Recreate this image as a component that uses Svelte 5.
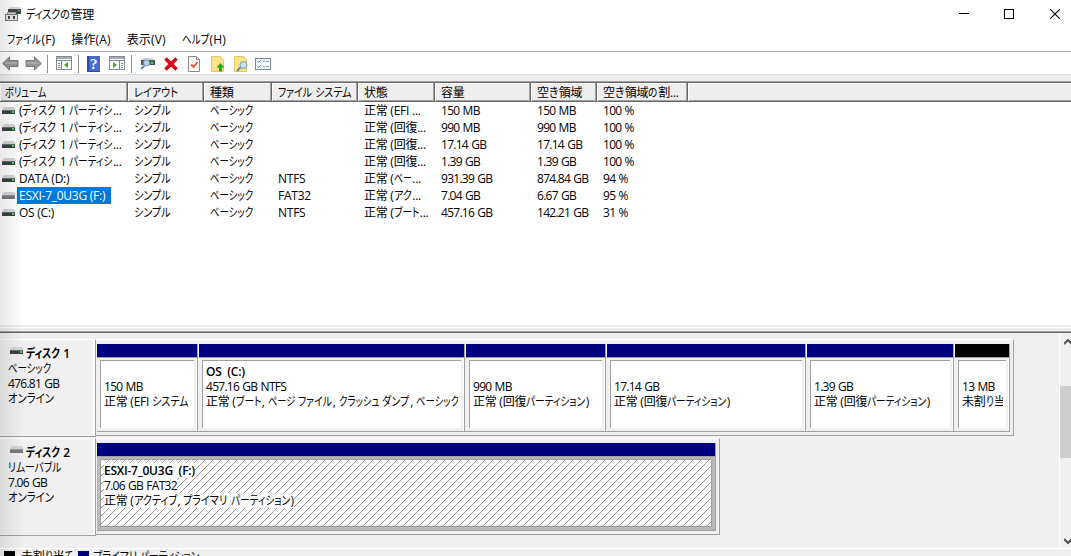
<script>
  const columns = [
    { label: 'ボリューム', width: 128 },
    { label: 'レイアウト', width: 76 },
    { label: '種類', width: 68 },
    { label: 'ファイル システム', width: 86 },
    { label: '状態', width: 77 },
    { label: '容量', width: 96 },
    { label: '空き領域', width: 66 },
    { label: '空き領域の割...', width: 91 },
  ];

  const recovery = '(ディスク 1 パーティシ...';

  const volumes = [
    { cells: [recovery, 'シンプル', 'ベーシック', '', '正常 (EFI ...', '150 MB', '150 MB', '100 %'] },
    { cells: [recovery, 'シンプル', 'ベーシック', '', '正常 (回復...', '990 MB', '990 MB', '100 %'] },
    { cells: [recovery, 'シンプル', 'ベーシック', '', '正常 (回復...', '17.14 GB', '17.14 GB', '100 %'] },
    { cells: [recovery, 'シンプル', 'ベーシック', '', '正常 (回復...', '1.39 GB', '1.39 GB', '100 %'] },
    { cells: ['DATA (D:)', 'シンプル', 'ベーシック', 'NTFS', '正常 (ベー...', '931.39 GB', '874.84 GB', '94 %'] },
    { cells: ['ESXI-7_0U3G (F:)', 'シンプル', 'ベーシック', 'FAT32', '正常 (アク...', '7.04 GB', '6.67 GB', '95 %'], removable: true, selected: true },
    { cells: ['OS (C:)', 'シンプル', 'ベーシック', 'NTFS', '正常 (ブート...', '457.16 GB', '142.21 GB', '31 %'] },
  ];

  const disks = [
    {
      name: 'ディスク 1', type: 'ベーシック', size: '476.81 GB', status: 'オンライン', width: 918,
      partitions: [
        { width: 101, name: '', size: '150 MB', status: '正常 (EFI システム' },
        { width: 267, name: 'OS\u00a0 (C:)', size: '457.16 GB NTFS', status: '正常 (ブート, ページ ファイル, クラッシュ ダンプ, ベーシック' },
        { width: 141, name: '', size: '990 MB', status: '正常 (回復パーティション)' },
        { width: 200, name: '', size: '17.14 GB', status: '正常 (回復パーティション)' },
        { width: 148, name: '', size: '1.39 GB', status: '正常 (回復パーティション)' },
        { width: 56, name: '', size: '13 MB', status: '未割り当', unallocated: true },
      ],
    },
    {
      name: 'ディスク 2', type: 'リムーバブル', size: '7.06 GB', status: 'オンライン', width: 624, removable: true,
      partitions: [
        { width: 619, name: 'ESXI-7_0U3G\u00a0 (F:)', size: '7.06 GB FAT32', status: '正常 (アクティブ, プライマリ パーティション)', selected: true },
      ],
    },
  ];

  const menus = ['ファイル(F)', '操作(A)', '表示(V)', 'ヘルプ(H)'];

  function kanaWidth(c) {
    if (/[ァィゥェォッャュョ]/.test(c)) return 6.6;
    if (/[リト]/.test(c)) return 7.5;
    if (/[りて]/.test(c)) return 8.3;
    return /[ぁ-ん]/.test(c) ? 10 : 9.3;
  }

  // UI kana are condensed, kanji and latin keep their own advance
  function runs(text) {
    return (text.match(/[ぁ-んァ-ヶー]+|[^ぁ-んァ-ヶー]+/g) ?? []).map((t) => ({
      t,
      kana: /^[ぁ-んァ-ヶー]/.test(t),
      width: [...t].reduce((w, c) => w + kanaWidth(c), 0),
    }));
  }
</script>

{#snippet label(text)}
  {#each runs(text) as run}{#if run.kana}<svg class="kana" width={run.width} height="10"><text y="10" textLength={run.width - 0.6} lengthAdjust="spacingAndGlyphs">{run.t}</text></svg>{:else}<span class="run" class:digits={/^\d/.test(run.t)}>{run.t}</span>{/if}{/each}
{/snippet}

{#snippet drive(removable)}
  <svg class="drive" width="14" height="10">
    <path d="M2 1h10l2 3H0z" fill="#d2d4d8" />
    <rect y="4" width="13" height="4" fill={removable ? '#77797c' : '#3d4044'} />
    <path d="M0 4.5h13" stroke={removable ? '#999' : '#686b70'} />
    {#if !removable}<rect x="10" y="5" width="2" height="2" fill="#25ef39" />{/if}
  </svg>
{/snippet}

{#snippet panelIcon(flip)}
  <svg width="17" height="15">
    <rect x=".5" y=".5" width="15" height="13" fill="#fafafa" stroke="#858b95" />
    <path d="M1 2h14" stroke="#a5abb5" stroke-width="2" />
    <path d="M1 4.5h14" stroke="#858b95" />
    <path d={flip ? 'M10.5 5v8' : 'M5.5 5v8'} stroke="#858b95" />
    <path d={flip ? 'M12 7.5h2M12 9.5h2M12 11.5h2' : 'M2 7.5h2M2 9.5h2M2 11.5h2'} stroke="#7c8ea5" />
    <path d={flip ? 'M4 6v6l4-3z' : 'M12 6v6L8 9z'} fill="#3bab27" />
  </svg>
{/snippet}

<div class="window">
  <header class="titlebar">
    <svg class="app-icon" width="17" height="16">
      <path d="M5 1h9l2 3H3z" fill="#d5d5d5" />
      <rect x="3" y="3" width="13" height="5" fill="#48494b" />
      <rect x="13" y="4" width="2" height="1" fill="#26dc37" />
      <rect x="2.5" y="6.5" width="8" height="2" fill="#ddd" stroke="#999" />
      <rect x=".5" y="8.5" width="12" height="6" fill="#e8e8e8" stroke="#777" />
      <path d="M3 10h2v3H3zM8 10h2v3H8z" fill="#444" />
    </svg>
    <span class="title">{@render label('ディスクの管理')}</span>
    <div class="controls">
      <svg width="10" height="10"><path d="M0 4.5h10" stroke="#000" /></svg>
      <svg width="10" height="10"><rect x=".5" y=".5" width="9" height="9" fill="none" stroke="#000" /></svg>
      <svg class="close" width="10" height="10"><path d="M0 0l10 10M10 0L0 10" stroke="#000" stroke-width="1.1" /></svg>
    </div>
  </header>

  <nav class="menubar">
    {#each menus as menu}<div>{@render label(menu)}</div>{/each}
  </nav>

  <div class="toolbar">
    <svg width="17" height="15"><path d="M.7 7.5L7.5 1v3.5H16v6H7.5V14z" fill="#969696" stroke="#777" /><path d="M3 7h12" stroke="#bdbdbd" /></svg>
    <svg class="forward" width="17" height="15"><path d="M16.3 7.5L9.5 1v3.5H1v6h8.5V14z" fill="#969696" stroke="#777" /><path d="M2 7h12" stroke="#bdbdbd" /></svg>
    <i class="sep"></i>
    {@render panelIcon(false)}
    <i class="sep"></i>
    <svg class="help" width="13" height="16">
      <rect width="13" height="16" fill="#2c4aa8" />
      <rect x="2" width="11" height="15" fill="#4569d0" />
      <text class="question" x="3" y="13">?</text>
    </svg>
    {@render panelIcon(true)}
    <i class="sep"></i>
    <svg width="15" height="13">
      <path d="M3 1h9l3 3H1z" fill="#ccd0d3" />
      <rect x="1" y="3" width="14" height="5" fill="#53595e" />
      <rect x="11" y="5" width="2" height="2" fill="#2ae43c" />
      <path d="M1 12l4-4" stroke="#708da4" stroke-width="2" />
      <circle cx="6.5" cy="6" r="3" fill="#aed7eb" stroke="#7897ad" />
    </svg>
    <svg width="14" height="14" class="delete"><path d="M1.5 1.5l11 11M12.5 1.5l-11 11" stroke="#d90012" stroke-width="3.6" /></svg>
    <svg width="13" height="16" class="file">
      <path d="M.5.5h8l3 3v12H.5z" fill="#fafafa" stroke="#8a8a8a" />
      <path d="M8.5.5v3h3" fill="none" stroke="#8a8a8a" />
      <path d="M3 8.5L5.5 11l4-5" fill="none" stroke="#ed6031" stroke-width="2" />
    </svg>
    <svg width="14" height="16" class="file">
      <path d="M.5.5h9l3 3v12H.5z" fill="#fbe38a" stroke="#e5c766" />
      <path d="M9.5 7l4 4.5H11v4H8v-4H5.500z" fill="#29a721" />
    </svg>
    <svg width="15" height="16" class="folder">
      <path d="M.5.5h9l3 3v12H.5z" fill="#fbe38a" stroke="#e5c766" />
      <path d="M3 15l4-4" stroke="#6b8aa0" stroke-width="2" />
      <circle cx="9.5" cy="9" r="3.5" fill="#c5e2f0" stroke="#7d9caf" />
    </svg>
    <svg width="16" height="12" class="list-icon">
      <rect x=".5" y=".5" width="15" height="11" fill="#f8fafc" stroke="#788594" />
      <path d="M2.5 3l1.2 1.5L6 2M2.5 8l1.2 1.5L6 7" fill="none" stroke="#3b8de0" />
      <path d="M8 3.5h2M11 3.5h3M8 8.5h2M11 8.5h3" stroke="#8b98a5" />
    </svg>
  </div>

  <section class="volume-list">
    <div class="row head">
      {#each columns as col}
        <div class="th" style:width="{col.width}px">{@render label(col.label)}</div>
      {/each}
      <div class="th rest"></div>
    </div>
    {#each volumes as volume}
      <div class="row">
        {#each volume.cells as cell, i}
          <div class="td" class:first={i === 0} style:width="{columns[i].width}px">
            {#if i === 0}{@render drive(volume.removable)}{/if}
            <div class="cell" class:selected={i === 0 && volume.selected}>{@render label(cell)}</div>
          </div>
        {/each}
      </div>
    {/each}
  </section>

  <section class="lower">
    <div class="disks">
      {#each disks as disk}
        <div class="disk">
          <div class="disk-info">
            <div class="disk-name">{@render drive(disk.removable)}<b>{@render label(disk.name)}</b></div>
            <div>{@render label(disk.type)}</div>
            <div>{@render label(disk.size)}</div>
            <div>{@render label(disk.status)}</div>
          </div>
          <div class="partitions" style:width="{disk.width}px">
            {#each disk.partitions as part}
              <div class="partition" class:active={part.selected} style:width="{part.width}px">
                <div class="stripe" class:black={part.unallocated}></div>
                <div class="part-body">
                  <div class="part-text">
                    <div class="line"><b>{@render label(part.name)}</b></div>
                    <div class="line"><span>{@render label(part.size)}</span></div>
                    <div class="line"><span>{@render label(part.status)}</span></div>
                  </div>
                </div>
              </div>
            {/each}
          </div>
        </div>
      {/each}
    </div>
    <div class="scrollbar">
      <svg width="8" height="6"><path d="M0 5l4-4 4 4" fill="none" stroke="#505050" stroke-width="2" /></svg>
      <div class="thumb"></div>
      <svg width="8" height="6"><path d="M0 1l4 4 4-4" fill="none" stroke="#505050" stroke-width="2" /></svg>
    </div>
  </section>

  <footer class="legend">
    <i class="swatch black"></i><span class="legend-text">{@render label('未割り当て')}</span>
    <i class="swatch"></i><span class="legend-text">{@render label('プライマリ パーティション')}</span>
  </footer>
  <div class="edge-shade"></div>
</div>

<style>
  :global(body) {
    margin: 0;
    overflow: hidden;
  }

  .window {
    position: relative;
    display: flex;
    flex-direction: column;
    width: 1071px;
    height: 556px;
    overflow: hidden;
    background: #fff;
    color: #000;
    font: 12px/15px 'Open Sans', 'Noto Sans CJK JP', sans-serif;
    white-space: nowrap;
  }

  .window * {
    box-sizing: border-box;
  }

  svg {
    flex: none;
    display: block;
  }

  .kana {
    display: inline-block;
    overflow: visible;
    fill: currentColor;
    font-family: 'Noto Sans CJK JP', sans-serif;
    font-feature-settings: 'palt';
    vertical-align: baseline;
  }

  .run {
    letter-spacing: -0.25px;
    white-space: pre;
  }

  .run.digits {
    letter-spacing: -0.72px;
    word-spacing: 0.8px;
  }

  /* Title and menu */
  .titlebar {
    display: flex;
    align-items: center;
    height: 27px;
    padding: 0 11px 0 5px;
  }

  .title {
    margin: 1px 0 0 4px;
  }

  .controls {
    display: flex;
    gap: 35px;
    margin-left: auto;
  }

  .close {
    margin-left: 1px;
  }

  .menubar {
    display: flex;
    gap: 16px;
    height: 25px;
    padding: 5px 7px 0;
    border-bottom: 1px solid #b0b0b4;
  }

  .menubar .run {
    letter-spacing: 0.15px;
  }

  .toolbar {
    display: flex;
    align-items: center;
    height: 23px;
    padding: 1px 2px 0;
    border-bottom: 1px solid #dcdcdc;
  }

  .forward {
    margin-left: 6px;
  }

  .sep {
    width: 1px;
    height: 18px;
    margin: 0 8px 0 5px;
    background: #8d8d8d;
  }

  .help {
    margin-right: 9px;
  }

  .question {
    fill: #fff;
    font: bold 15px 'Liberation Serif', serif;
  }

  .delete {
    margin-left: 9px;
  }

  .file {
    margin-left: 10px;
  }

  .folder {
    margin-left: 9px;
  }

  .list-icon {
    margin-left: 6px;
  }

  /* Volume list */
  .volume-list {
    height: 250px;
    border-top: 6px solid #eee;
  }

  .row {
    display: flex;
    height: 17px;
  }

  .head {
    height: 21px;
    border-top: 1px solid #a0a0a0;
    border-bottom: 1px solid #696969;
    box-shadow: inset 0 1px #696969, inset 0 -1px #a0a0a0;
    background: #eee;
  }

  .th {
    flex: none;
    height: 18px;
    margin-top: 1px;
    padding: 2px 0 0 5px;
    border-right: 1px solid #696969;
    box-shadow: inset -1px 0 #a0a0a0, inset 1px 1px #fff;
    overflow: hidden;
  }

  .th + .th {
    padding-left: 6px;
  }

  .th.rest {
    flex: 1;
    border: 0;
    box-shadow: inset 1px 1px #fff;
  }

  .td {
    display: flex;
    flex: none;
    align-items: center;
    padding-left: 6px;
    overflow: hidden;
  }

  .td.first {
    padding-left: 2px;
  }

  .cell {
    height: 17px;
    line-height: 17px;
  }

  .first .cell {
    margin-left: 1px;
    padding: 0 6px 0 2px;
  }

  .cell.selected {
    background: #0078d7;
    color: #fff;
  }

  /* Disk map */
  .lower {
    display: flex;
    justify-content: space-between;
    height: 224px;
    background: #f0f0f0;
    border-top: 2px solid #eee;
    border-bottom: 1px solid #fff;
    box-shadow: inset 0 1px #fff, inset 0 4px #eee, inset 0 5px #a0a0a0, inset 0 6px #696969;
  }

  .disks {
    padding-top: 12px;
  }

  .disk {
    display: flex;
    height: 97px;
    margin-bottom: 2px;
  }

  .disk-info {
    width: 96px;
    height: 98px;
    padding: 6px 0 0 8px;
    border-top: 1px solid #fff;
    border-right: 1px solid #a0a0a0;
    border-bottom: 1px solid #a0a0a0;
    box-shadow: inset -2px 0 #fff;
  }

  .disk-name {
    display: flex;
    padding-left: 2px;
  }

  .disk-name b {
    margin-left: 2px;
  }

  b {
    font-weight: 600;
  }

  .partitions {
    display: flex;
    height: 97px;
    padding: 4px 0 0 1px;
    border-top: 1px solid #fff;
    border-right: 1px solid #a0a0a0;
    border-bottom: 1px solid #a0a0a0;
  }

  .partition {
    flex: none;
    height: 88px;
    border-right: 1px solid #a0a0a0;
    border-bottom: 1px solid #a0a0a0;
    box-shadow: inset -1px 0 #fff;
  }

  .stripe {
    height: 14px;
    border-bottom: 1px solid #a0a0a0;
    background: #000080;
  }

  .partition + .partition .stripe {
    border-left: 1px solid #fff;
  }

  .black {
    background: #000;
  }

  .part-body {
    height: 73px;
    padding: 2px 3px 3px;
  }

  .partition + .partition .part-body {
    padding-left: 4px;
  }

  .part-text {
    height: 68px;
    padding: 3px 3px 0;
    border-top: 1px solid #a0a0a0;
    border-left: 1px solid #a0a0a0;
    background: #fff;
    overflow: hidden;
  }

  .line {
    height: 15px;
    overflow: hidden;
  }

  .active .part-body {
    background: #b8b8b8;
  }

  .active .part-text {
    border: 1px solid #a0a0a0;
    background: repeating-linear-gradient(135deg, #fff 0 4.95px, #929292 4.95px 5.657px);
  }

  .active .line > * {
    display: inline-block;
    background: #fff;
  }

  .scrollbar {
    display: flex;
    flex-direction: column;
    width: 12px;
    margin-top: 6px;
    padding: 6px 0 4px 4px;
    border-left: 1px solid #fff;
    overflow: hidden;
  }

  .thumb {
    height: 72px;
    margin: 41px 0 auto -4px;
    background: #cdcdcd;
  }

  .legend {
    display: flex;
    flex: 1;
    padding: 2px 4px 0;
    background: #f0f0f0;
    overflow: hidden;
  }

  .swatch {
    width: 11px;
    height: 11px;
    background: #000080;
  }

  .swatch.black {
    background: #000;
  }

  .legend-text {
    margin: -2px 5px 0 6px;
  }

  .swatch:not(.black) + .legend-text {
    margin-left: 4px;
  }

  /* Soft shade down the left edge of the window */
  .edge-shade {
    position: absolute;
    inset: 0 auto 0 0;
    width: 24px;
    background: linear-gradient(90deg, rgba(0, 0, 0, 0.09), rgba(0, 0, 0, 0));
    pointer-events: none;
  }
</style>
